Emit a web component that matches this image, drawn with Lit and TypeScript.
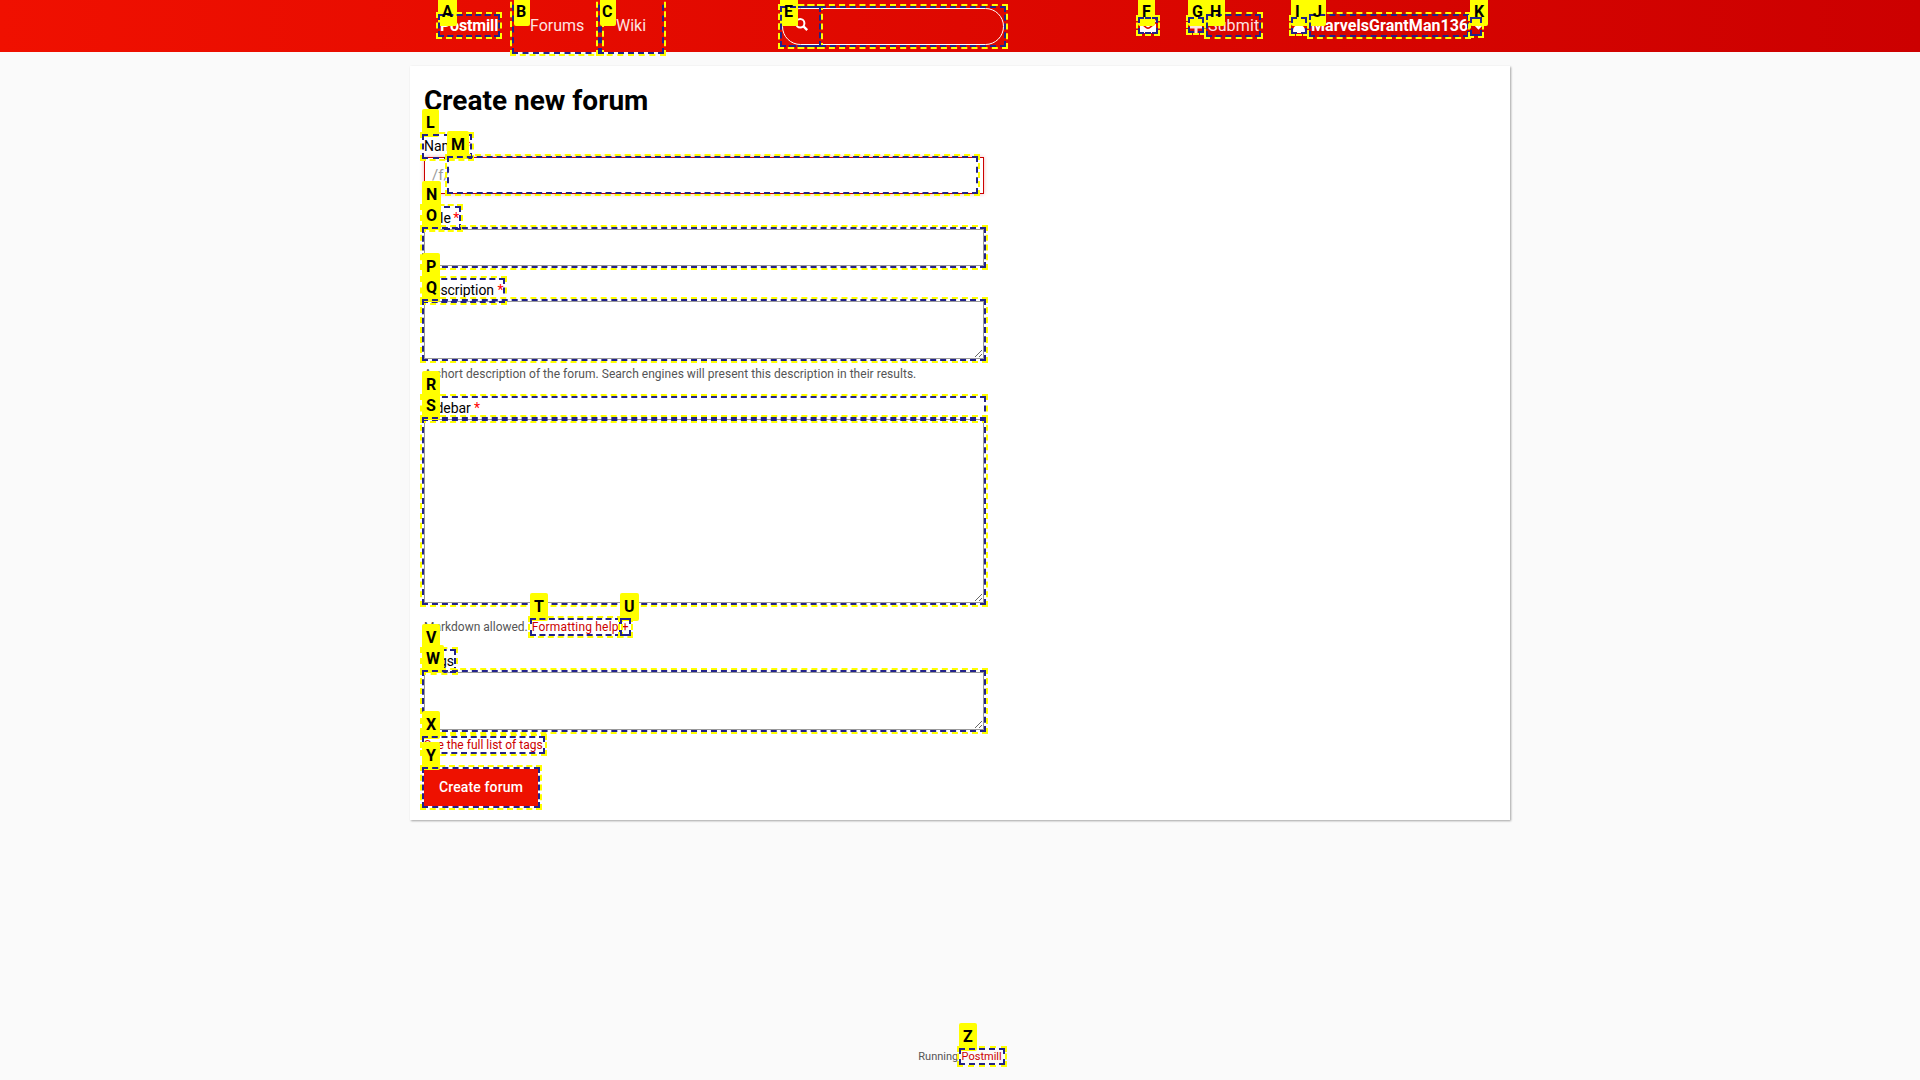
import { LitElement, html, css, svg } from "lit";
import { customElement } from "lit/decorators.js";
import { classMap } from "lit/directives/class-map.js";
import { styleMap } from "lit/directives/style-map.js";

// key, left, top, right, bottom of each marked control, and the badge's own left/top/width
type Hint = [string, number, number, number, number, number, number, number];

const HINTS: Hint[] = [
  ["A", 440, 16, 498, 35, 438, -2, 19],
  ["B", 514, -4, 600, 52, 514, -2, 16],
  ["C", 600, -4, 662, 52, 600, -2, 16],
  ["D", 782, 8, 819, 45, 780, -2, 18],
  ["E", 782, 8, 1004, 45, 780, -2, 18],
  ["F", 1140, 19, 1156, 32, 1138, -2, 17],
  ["G", 1190, 19, 1202, 31, 1188, -2, 19],
  ["H", 1208, 16, 1259, 35, 1206, -2, 19],
  ["I", 1293, 19, 1305, 32, 1291, -2, 18],
  ["J", 1311, 16, 1467, 35, 1309, -2, 17],
  ["K", 1472, 19, 1480, 34, 1470, -2, 18],
  ["L", 424, 136, 470, 157, 422, 109, 17],
  ["M", 449, 158, 976, 192, 447, 131, 22],
  ["N", 424, 208, 459, 228, 422, 181, 19],
  ["O", 424, 229, 984, 266, 422, 202, 19],
  ["P", 424, 280, 503, 301, 422, 253, 18],
  ["Q", 424, 301, 984, 359, 422, 274, 18],
  ["R", 424, 398, 984, 419, 422, 371, 18],
  ["S", 424, 419, 984, 603, 422, 392, 18],
  ["T", 532, 620, 619, 634, 530, 593, 18],
  ["U", 622, 620, 629, 634, 620, 593, 19],
  ["V", 424, 651, 454, 671, 422, 624, 18],
  ["W", 424, 672, 984, 730, 422, 645, 22],
  ["X", 424, 738, 543, 752, 422, 711, 18],
  ["Y", 424, 769, 538, 806, 422, 742, 18],
  ["Z", 961, 1050, 1003, 1063, 959, 1023, 18],
];

@customElement("hint-layer")
export class HintLayer extends LitElement {
  static styles = css`
    :host { position: absolute; inset: 0; overflow: hidden; pointer-events: none; }
    .frame { position: absolute; box-sizing: border-box; border: 2px dashed #22228a; outline: 2px dashed #ff0; }
    .plate { position: absolute; height: 28px; background: #ff0; border-radius: 2px; }
    .key {
      position: absolute; box-sizing: border-box; height: 28px; padding-left: 4px;
      color: #000; font: 700 16px/28px Roboto, sans-serif;
    }
    .tight { padding-left: 2px; }
  `;
  render() {
    return HINTS.map(([key, l, t, r, b, x, y, w]) => {
      const place = styleMap({ left: `${x}px`, top: `${y}px`, width: `${w}px` });
      return html`
        <div class="plate" style=${place}></div>
        <div class="frame" style=${styleMap({ left: `${l - 2}px`, top: `${t - 2}px`, width: `${r - l + 4}px`, height: `${b - t + 4}px` })}></div>
        <div class=${classMap({ key: true, tight: x === l })} style=${place}>${key}</div>`;
    });
  }
}

const icons = {
  search: svg`<circle cx="5.200" cy="5.200" r="4.200" fill="none" stroke="currentColor" stroke-width="2"/><path d="M8.200 8.200 12.200 12.200" stroke="currentColor" stroke-width="2.400"/>`,
  mail: svg`<path fill="currentColor" d="M0 1.500C0 .7.7 0 1.500 0h13c.8 0 1.500.7 1.500 1.500L9.500 6.700c-1 .8-2 .8-3 0L0 1.500zM0 3.500l5.600 4.500c1.600 1.200 3.200 1.200 4.800 0L16 3.500v8c0 .8-.7 1.500-1.500 1.500h-13C.7 13 0 12.300 0 11.500z"/>`,
  plus: svg`<path fill="currentColor" d="M4.500 0h3v4.500H12v3H7.500V12h-3V7.500H0v-3h4.500z"/>`,
  user: svg`<path fill="currentColor" d="M6 0a3.300 3.300 0 0 1 2.500 5.800C11 6.200 12 8 12 11c0 1.300-.7 2-1.700 2H1.700C.7 13 0 12.300 0 11c0-3 1-4.800 3.500-5.200A3.300 3.300 0 0 1 6 0z"/>`,
  down: svg`<path d="M1 1.500 4.500 5 8 1.500" fill="none" stroke="currentColor" stroke-width="2.400"/>`,
};

@customElement("app-root")
export class AppRoot extends LitElement {
  static styles = css`
    :host {
      position: relative; display: flex; flex-direction: column; height: 1080px; overflow: hidden;
      background: #fafafa; color: #000; font: 14px/20px Roboto, sans-serif;
    }
    * { box-sizing: border-box; }
    a { color: #c00; text-decoration: none; }
    svg { display: block; flex: none; }
    .bar { height: 52px; flex: none; background: linear-gradient(to right, #f01000, #c00); color: #fff; font-size: 16px; }
    .inner { width: 1100px; height: 52px; margin: 0 auto; padding: 0 14px; display: flex; align-items: center; }
    .inner a { color: #fff; }
    .nav { display: flex; width: 358px; }
    .nav a { padding: 0 16px; line-height: 52px; }
    .nav .strong { width: 90px; letter-spacing: -.15px; }
    .nav .forums { width: 86px; }
    .inner .light { color: #fde3e1; }
    .strong { font-weight: 700; }
    .search { width: 222px; height: 37px; margin-top: 1px; border: 1px solid #fff; border-radius: 19px; display: flex; align-items: center; padding-left: 12px; }
    .search svg { margin: -4px 0 0 0; }
    .tools { flex: 1; display: flex; align-items: center; padding-left: 136px; }
    .submit { display: flex; align-items: center; gap: 6px; width: 69px; margin-left: 34px; letter-spacing: .15px; }
    .user { display: flex; align-items: center; gap: 6px; margin-left: 34px; letter-spacing: .06px; }
    .submit svg { margin-top: 1px; }
    .card {
      width: 1100px; height: 754px; flex: none; margin: 14px auto 0; padding: 17px 14px 0;
      background: #fff; box-shadow: 1px 1px 2px rgba(0, 0, 0, .35);
    }
    h1 { margin: 0; font-size: 28px; line-height: 36px; font-weight: 700; }
    form { width: 560px; display: flex; flex-direction: column; }
    label { display: block; height: 21px; letter-spacing: -.08px; }
    .req { color: #f00; }
    .title .req { margin-left: -1px; }
    .field { display: flex; flex-direction: column; }
    .name { margin-top: 17px; height: 72px; }
    .title { height: 72px; }
    .desc { height: 118px; }
    .side { height: 253px; }
    .tags { height: 118px; }
    .prefix { height: 37px; border: 1px solid #c00; box-shadow: 0 0 4px rgba(204, 0, 0, .3); padding: 0 7px; color: #999; font-size: 15px; line-height: 35px; }
    .box { display: block; width: 100%; margin: 0; height: 37px; border: 1px solid #999; border-radius: 0; background: #fff; outline: none; padding: 7px; resize: none; font: inherit; }
    .short { height: 58px; resize: vertical; }
    .tall { height: 184px; resize: vertical; }
    .help { margin: 0; color: #555; font-size: 12px; line-height: 14px; padding-top: 8px; }
    .desc .help { letter-spacing: .034px; }
    .formatting { letter-spacing: .18px; margin-left: 1px; }
    .tall + .help { padding-top: 17px; }
    .tags .help { padding-top: 8px; }
    button { align-self: flex-start; width: 114px; height: 37px; border: 0; padding: 0 0 2px; background: #e10; color: #fff; font: 500 14px Roboto, sans-serif; letter-spacing: .13px; }
    footer { margin-top: 229px; text-align: center; color: #555; font-size: 11px; line-height: 15px; word-spacing: .6px; }
  `;

  render() {
    const req = html`<span class="req">*</span>`;
    return html`
      <header class="bar">
        <div class="inner">
          <nav class="nav">
            <a class="strong" href="#">Postmill</a><a class="light forums" href="#">Forums</a><a class="light" href="#">Wiki</a>
          </nav>
          <div class="search"><svg width="14" height="14" viewBox="0 0 14 14">${icons.search}</svg></div>
          <div class="tools">
            <svg width="16" height="13" viewBox="0 0 16 13">${icons.mail}</svg>
            <a class="submit light" href="#"><svg width="12" height="12" viewBox="0 0 12 12">${icons.plus}</svg>Submit</a>
            <a class="user strong" href="#"><svg width="12" height="13" viewBox="0 0 12 13">${icons.user}</svg><span>MarvelsGrantMan136</span><svg width="9" height="7" viewBox="0 0 9 7">${icons.down}</svg></a>
          </div>
        </div>
      </header>
      <main class="card">
        <h1>Create new forum</h1>
        <form>
          <div class="field name"><label>Name ${req}</label><div class="prefix">/f/</div></div>
          <div class="field title"><label>Title ${req}</label><input class="box"></div>
          <div class="field desc"><label>Description ${req}</label><textarea class="box short"></textarea>
            <p class="help">A short description of the forum. Search engines will present this description in their results.</p></div>
          <div class="field side"><label>Sidebar ${req}</label><textarea class="box tall"></textarea>
            <p class="help">Markdown allowed. <a class="formatting" href="#">Formatting help</a> <a href="#">+</a></p></div>
          <div class="field tags"><label>Tags</label><textarea class="box short"></textarea>
            <p class="help"><a href="#">See the full list of tags</a></p></div>
          <button type="button">Create forum</button>
        </form>
      </main>
      <footer>Running <a href="#">Postmill</a></footer>
      <hint-layer></hint-layer>`;
  }
}
